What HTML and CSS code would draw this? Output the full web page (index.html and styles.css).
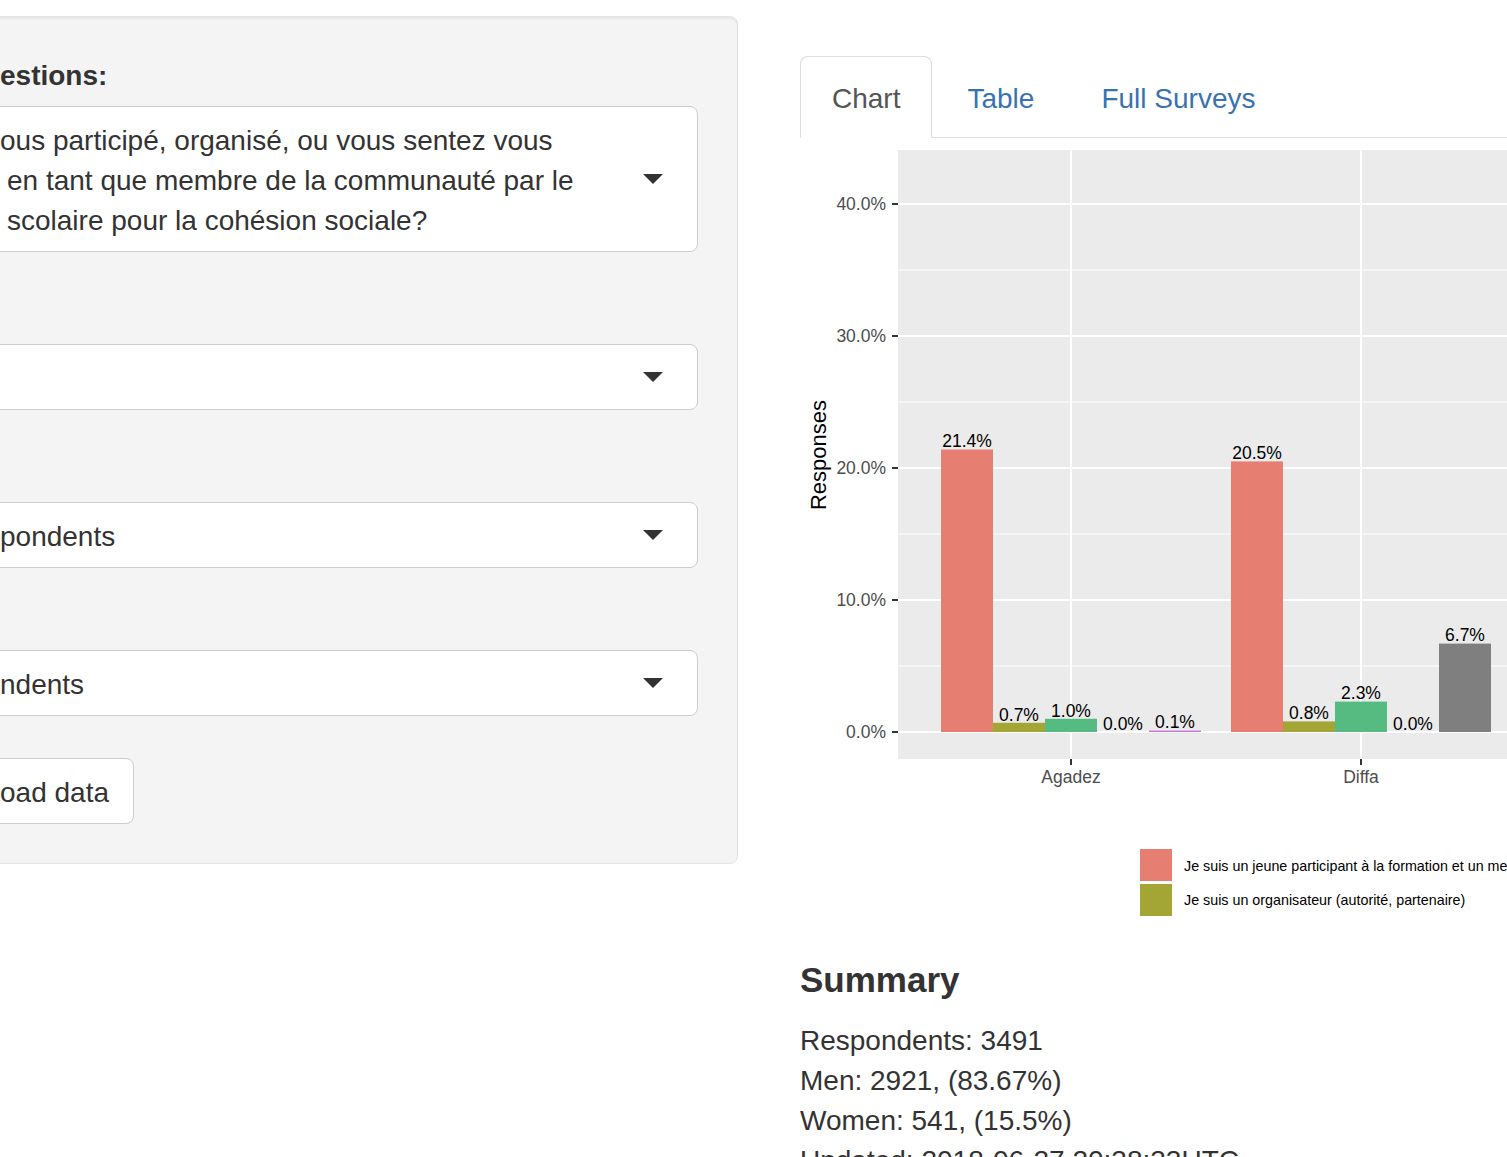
FILE: index.html
```html
<!DOCTYPE html>
<html lang="fr">
<head>
<meta charset="utf-8">
<title>Survey dashboard</title>
<link rel="stylesheet" href="styles.css">
</head>
<body>
<div class="page">
  <aside class="sidebar">
    <div class="well">
      <div class="label">estions:</div>
      <div class="select select-multi">
        <div class="select-text">
          <div class="line">ous participé, organisé, ou vous sentez vous</div>
          <div class="line indent">en tant que membre de la communauté par le</div>
          <div class="line indent">scolaire pour la cohésion sociale?</div>
        </div>
        <span class="caret"></span>
      </div>
      <div class="select select-2">
        <div class="select-text"></div>
        <span class="caret"></span>
      </div>
      <div class="select select-3">
        <div class="select-text">pondents</div>
        <span class="caret"></span>
      </div>
      <div class="select select-4">
        <div class="select-text">ndents</div>
        <span class="caret"></span>
      </div>
      <div class="btn">oad data</div>
    </div>
  </aside>

  <main class="main">
    <ul class="tabs">
      <li class="tab active">Chart</li>
      <li class="tab">Table</li>
      <li class="tab">Full Surveys</li>
    </ul>

    <div class="plot">
      <svg width="760" height="800" viewBox="0 0 760 800" xmlns="http://www.w3.org/2000/svg">
        <rect x="98" y="12" width="662" height="609" fill="#ebebeb"/>
        <g stroke="#ffffff" stroke-width="1">
          <line x1="98" x2="760" y1="132" y2="132"/>
          <line x1="98" x2="760" y1="264" y2="264"/>
          <line x1="98" x2="760" y1="396" y2="396"/>
          <line x1="98" x2="760" y1="528" y2="528"/>
        </g>
        <g stroke="#ffffff" stroke-width="2">
          <line x1="98" x2="760" y1="66" y2="66"/>
          <line x1="98" x2="760" y1="198" y2="198"/>
          <line x1="98" x2="760" y1="330" y2="330"/>
          <line x1="98" x2="760" y1="462" y2="462"/>
          <line x1="98" x2="760" y1="594" y2="594"/>
          <line x1="271" x2="271" y1="12" y2="621"/>
          <line x1="561" x2="561" y1="12" y2="621"/>
        </g>

        <rect x="141" y="311.5" width="52" height="282.5" fill="#e77e72"/>
        <rect x="193" y="584.8" width="52" height="9.2" fill="#a3a535"/>
        <rect x="245" y="580.8" width="52" height="13.2" fill="#55bb80"/>
        <rect x="349" y="592.6" width="52" height="1.4" fill="#d36fe6"/>

        <rect x="431" y="323.4" width="52" height="270.6" fill="#e77e72"/>
        <rect x="483" y="583.4" width="52" height="10.6" fill="#a3a535"/>
        <rect x="535" y="563.6" width="52" height="30.4" fill="#55bb80"/>
        <rect x="639" y="505.6" width="52" height="88.4" fill="#7f7f7f"/>

        <g class="bar-label" text-anchor="middle">
          <text x="167" y="309">21.4%</text>
          <text x="219" y="582.5">0.7%</text>
          <text x="271" y="578.5">1.0%</text>
          <text x="323" y="591.5">0.0%</text>
          <text x="375" y="590.3">0.1%</text>
          <text x="457" y="321">20.5%</text>
          <text x="509" y="581">0.8%</text>
          <text x="561" y="561.2">2.3%</text>
          <text x="613" y="591.5">0.0%</text>
          <text x="665" y="503.2">6.7%</text>
        </g>

        <g stroke="#333333" stroke-width="2">
          <line x1="92" x2="98" y1="66" y2="66"/>
          <line x1="92" x2="98" y1="198" y2="198"/>
          <line x1="92" x2="98" y1="330" y2="330"/>
          <line x1="92" x2="98" y1="462" y2="462"/>
          <line x1="92" x2="98" y1="594" y2="594"/>
          <line x1="271" x2="271" y1="621" y2="627"/>
          <line x1="561" x2="561" y1="621" y2="627"/>
        </g>
        <g class="axis-text" text-anchor="end">
          <text x="86" y="72">40.0%</text>
          <text x="86" y="204">30.0%</text>
          <text x="86" y="336">20.0%</text>
          <text x="86" y="468">10.0%</text>
          <text x="86" y="600">0.0%</text>
        </g>
        <g class="axis-text" text-anchor="middle">
          <text x="271" y="645">Agadez</text>
          <text x="561" y="645">Diffa</text>
        </g>
        <text class="axis-title" transform="translate(26 317) rotate(-90)" text-anchor="middle">Responses</text>

        <rect x="340" y="711" width="32" height="32" fill="#e77e72"/>
        <rect x="340" y="746" width="32" height="32" fill="#a3a535"/>
        <g class="legend-text">
          <text x="384" y="733">Je suis un jeune participant à la formation et un membre de la communauté</text>
          <text x="384" y="767">Je suis un organisateur (autorité, partenaire)</text>
        </g>
      </svg>
    </div>

    <h3 class="summary-title">Summary</h3>
    <div class="summary">
      <div>Respondents: 3491</div>
      <div>Men: 2921, (83.67%)</div>
      <div>Women: 541, (15.5%)</div>
      <div>Updated: 2018-06-27 20:38:33UTC</div>
    </div>
  </main>
</div>
</body>
</html>
```

FILE: styles.css
```css
html, body {
  margin: 0;
  padding: 0;
  background: #ffffff;
}

body {
  width: 1507px;
  height: 1157px;
  overflow: hidden;
  font-family: "Liberation Sans", Arial, sans-serif;
  font-size: 28px;
  line-height: 40px;
  color: #333333;
}

.page {
  display: flex;
  align-items: flex-start;
  width: 1507px;
}

/* ---------- sidebar ---------- */

.sidebar {
  flex: 0 0 798px;
  margin-left: -60px;
  padding-top: 16px;
}

.well {
  display: flex;
  flex-direction: column;
  align-items: flex-start;
  background: #f4f4f4;
  border: 1px solid #e3e3e3;
  border-radius: 8px;
  box-shadow: inset 0 2px 2px rgba(0, 0, 0, 0.05);
  padding: 38px 39px 39px 38px;
}

.label {
  font-weight: bold;
  padding-left: 21px;
  padding-top: 1px;
  margin-bottom: 10px;
}

.select {
  align-self: stretch;
  display: flex;
  align-items: center;
  background: #ffffff;
  border: 1px solid #cccccc;
  border-radius: 8px;
  padding: 14px 34px 10px 20px;
  min-height: 40px;
  white-space: nowrap;
}

.select-text {
  flex: 1;
  min-height: 40px;
}

.line.indent {
  padding-left: 7px;
}

.caret {
  flex: 0 0 auto;
  width: 0;
  height: 0;
  margin-top: -4px;
  border-top: 10px solid #333333;
  border-left: 10px solid transparent;
  border-right: 10px solid transparent;
}

.select-2 { margin-top: 92px; }
.select-3 { margin-top: 92px; }
.select-4 { margin-top: 82px; }

.btn {
  margin-top: 42px;
  background: #ffffff;
  border: 1px solid #cccccc;
  border-radius: 8px;
  padding: 14px 24px 10px 20px;
  white-space: nowrap;
}

/* ---------- main ---------- */

.main {
  flex: 0 0 760px;
  margin-left: 62px;
  padding-top: 56px;
}

.tabs {
  display: flex;
  list-style: none;
  margin: 0;
  padding: 0;
  border-bottom: 1px solid #dddddd;
}

.tab {
  margin-bottom: -1px;
  margin-right: 3px;
  padding: 22px 31px 18px 31px;
  border: 1px solid transparent;
  border-radius: 8px 8px 0 0;
  color: #3a72b0;
  white-space: nowrap;
}

.tab.active {
  color: #555555;
  background: #ffffff;
  border-color: #dddddd;
  border-bottom-color: transparent;
}

.plot svg {
  display: block;
}

.plot text {
  font-family: "Liberation Sans", Arial, sans-serif;
}

.bar-label text {
  font-size: 17.5px;
  fill: #000000;
}

.axis-text text {
  font-size: 17.5px;
  fill: #4d4d4d;
}

.axis-title {
  font-size: 22px;
  fill: #000000;
}

.legend-text text {
  font-size: 14.3px;
  fill: #000000;
}

.summary-title {
  margin: 23px 0 22px 0;
  font-size: 35px;
  line-height: 38px;
  font-weight: bold;
  color: #333333;
}

.summary {
  white-space: nowrap;
}
```
